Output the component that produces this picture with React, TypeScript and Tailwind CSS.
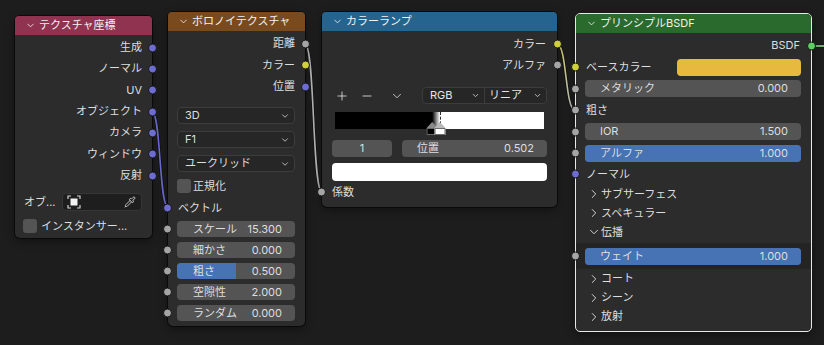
import { ChevronDown, ChevronRight, Plus, Minus, Pipette } from 'lucide-react';

type Sock = 'vec' | 'col' | 'flt' | 'sh';

const sockClass: Record<Sock, string> = {
  vec: 'bg-[#6c6cd2]',
  col: 'bg-[#cfcf3c]',
  flt: 'bg-[#a5a5a5]',
  sh: 'bg-[#5ccf60]',
};

const Socket = ({ type, side }: { type: Sock; side: 'in' | 'out' }) => (
  <span
    className={`absolute top-1/2 -translate-y-1/2 w-[9px] h-[9px] rounded-full border border-[#161616] ${sockClass[type]} ${
      side === 'in' ? 'left-[-5px]' : 'right-[-5px]'
    }`}
  />
);

const Header = ({ title, color, h }: { title: string; color: string; h: string }) => (
  <div className={`flex items-center gap-[3px] pl-[10px] text-[#f2f2f2] rounded-t-[4px] ${h} ${color}`}>
    <ChevronDown size={11} strokeWidth={1.75} />
    <span>{title}</span>
  </div>
);

const OutRow = ({ label, type, h, pr }: { label: string; type: Sock; h: string; pr: string }) => (
  <div className={`relative flex items-center justify-end ${h} ${pr}`}>
    <span>{label}</span>
    <Socket type={type} side="out" />
  </div>
);

const Field = ({
  label,
  value,
  fill,
  className,
}: {
  label: string;
  value: string;
  fill?: string;
  className: string;
}) => (
  <div className={`relative rounded-[4px] bg-[#545454] overflow-hidden flex items-center justify-between ${className}`}>
    {fill && <div className="absolute inset-y-0 left-0 bg-[#4772b3]" style={{ width: fill }} />}
    <span className="relative">{label}</span>
    <span className="relative">{value}</span>
  </div>
);

const Dropdown = ({ label }: { label: string }) => (
  <div className="h-[17px] rounded-[4px] bg-[#262626] border border-[#3c3c3c] flex items-center justify-between pl-[7px] pr-[4px]">
    <span>{label}</span>
    <ChevronDown size={10} strokeWidth={2} className="text-[#cfcfcf]" />
  </div>
);

const ObjIcon = () => (
  <svg width="14" height="14" viewBox="0 0 14 14" fill="none">
    <path d="M1 4V1h3M10 1h3v3M13 10v3h-3M4 13H1v-3" stroke="#d0d0d0" strokeWidth="1.2" />
    <rect x="3.5" y="3.5" width="7" height="7" fill="#f2f2f2" />
  </svg>
);

const PanelRow = ({ label, open }: { label: string; open?: boolean }) => (
  <div className="h-[19px] flex items-center gap-0 pl-[11px]">
    {open ? <ChevronDown size={14} strokeWidth={1.6} /> : <ChevronRight size={14} strokeWidth={1.6} />}
    <span>{label}</span>
  </div>
);

const TexCoordNode = () => (
  <div className="absolute left-[15px] top-[16px] w-[137px] rounded-[5px] bg-[#2c2c2c] shadow-[0_0_0_1px_rgba(0,0,0,0.55),0_3px_8px_rgba(0,0,0,0.4)]">
    <Header title="テクスチャ座標" color="bg-[#8f3350]" h="h-[19px]" />
    <div className="pt-[2px] pb-[5px]">
      {[
        ['生成', 'vec'],
        ['ノーマル', 'vec'],
        ['UV', 'vec'],
        ['オブジェクト', 'vec'],
        ['カメラ', 'vec'],
        ['ウィンドウ', 'vec'],
        ['反射', 'vec'],
      ].map(([l, t]) => (
        <OutRow key={l} label={l} type={t as Sock} h="h-[21.33px]" pr="pr-[10px]" />
      ))}
      <div className="mt-[7px] h-[18px] flex items-center pl-[9px] pr-[10px] gap-[6px]">
        <span className="w-[32px] shrink-0 whitespace-nowrap">オブ...</span>
        <div className="flex-1 h-[18px] rounded-[4px] bg-[#1e1e1e] border border-[#363636] flex items-center justify-between pl-[4px] pr-[5px]">
          <ObjIcon />
          <Pipette size={12} strokeWidth={1.75} className="text-[#d6d6d6]" />
        </div>
      </div>
      <div className="mt-[8px] h-[14px] flex items-center gap-[4px] pl-[8px]">
        <span className="w-[14px] h-[14px] rounded-[3px] bg-[#545454]" />
        <span className="whitespace-nowrap">インスタンサー...</span>
      </div>
    </div>
  </div>
);

const VoronoiNode = () => (
  <div className="absolute left-[168px] top-[12px] w-[137px] rounded-[5px] bg-[#2c2c2c] shadow-[0_0_0_1px_rgba(0,0,0,0.55),0_3px_8px_rgba(0,0,0,0.4)]">
    <Header title="ボロノイテクスチャ" color="bg-[#7a4a1f]" h="h-[19px]" />
    <div className="pt-[2px] pb-[5px]">
      <OutRow label="距離" type="flt" h="h-[21.5px]" pr="pr-[10px]" />
      <OutRow label="カラー" type="col" h="h-[21.5px]" pr="pr-[10px]" />
      <OutRow label="位置" type="vec" h="h-[21.5px]" pr="pr-[10px]" />
      <div className="mt-[9.5px] flex flex-col gap-[7px] pl-[9px] pr-[10px]">
        <Dropdown label="3D" />
        <Dropdown label="F1" />
        <Dropdown label="ユークリッド" />
      </div>
      <div className="mt-[7px] h-[14px] flex items-center gap-[2px] pl-[9px]">
        <span className="w-[14px] h-[14px] rounded-[3px] bg-[#545454]" />
        <span>正規化</span>
      </div>
      <div className="relative mt-[5px] h-[20px] flex items-center pl-[10px]">
        <span>ベクトル</span>
        <Socket type="vec" side="in" />
      </div>
      <div className="mt-[3px] flex flex-col gap-[5px]">
        {[
          ['スケール', '15.300', undefined],
          ['細かさ', '0.000', undefined],
          ['粗さ', '0.500', '50%'],
          ['空隙性', '2.000', undefined],
          ['ランダム', '0.000', undefined],
        ].map(([l, v, f]) => (
          <div key={l} className="relative h-[16px] pl-[9px] pr-[10px]">
            <Socket type="flt" side="in" />
            <Field label={l as string} value={v as string} fill={f} className="h-[16px] pl-[16px] pr-[13px]" />
          </div>
        ))}
      </div>
    </div>
  </div>
);

const Handle = ({ left, fill, active }: { left: string; fill: string; active?: boolean }) => (
  <div className="absolute top-[10px] w-[11px] -translate-x-1/2 flex flex-col items-center" style={{ left }}>
    <div className={`w-[11px] h-[6px] [clip-path:polygon(50%_0,100%_100%,0_100%)] ${active ? 'bg-[#b9b9b9]' : 'bg-[#8a8a8a]'}`} />
    <div className={`w-[11px] h-[7px] border border-[#6a6a6a] ${fill}`} />
  </div>
);

const ColorRampNode = () => (
  <div className="absolute left-[322px] top-[12px] w-[235px] rounded-[5px] bg-[#2c2c2c] shadow-[0_0_0_1px_rgba(0,0,0,0.55),0_3px_8px_rgba(0,0,0,0.4)]">
    <Header title="カラーランプ" color="bg-[#266490]" h="h-[19px]" />
    <div className="pt-[2.5px] pb-[6px]">
      <OutRow label="カラー" type="col" h="h-[21px]" pr="pr-[11px]" />
      <OutRow label="アルファ" type="flt" h="h-[21px]" pr="pr-[11px]" />
      <div className="mt-[11.5px] h-[17px] flex items-center pl-[13px] pr-[10px] text-[#e6e6e6]">
        <Plus size={14} strokeWidth={1.4} />
        <Minus size={14} strokeWidth={1.4} className="ml-[11px]" />
        <ChevronDown size={14} strokeWidth={1.4} className="ml-[16px]" />
        <div className="ml-auto w-[125px] h-[17px] rounded-[4px] bg-[#262626] border border-[#3c3c3c] flex">
          <div className="w-[62px] flex items-center justify-between pl-[7px] pr-[4px] border-r border-[#3c3c3c]">
            <span>RGB</span>
            <ChevronDown size={9} strokeWidth={2} />
          </div>
          <div className="flex-1 flex items-center justify-between pl-[4px] pr-[4px]">
            <span>リニア</span>
            <ChevronDown size={9} strokeWidth={2} />
          </div>
        </div>
      </div>
      <div className="relative mt-[8px] mx-[13px] h-[17px] bg-[linear-gradient(to_right,#000_46.5%,#fff_50.2%)]">
        <div className="absolute top-0 bottom-0 left-[50.2%] border-l border-dashed border-[#2a2a2a]" />
        <Handle left="46.5%" fill="bg-black" />
        <Handle left="50.2%" fill="bg-white" active />
      </div>
      <div className="mt-[11px] flex gap-[10px] px-[10px]">
        <div className="w-[60px] h-[17px] rounded-[4px] bg-[#545454] flex items-center justify-center">1</div>
        <Field label="位置" value="0.502" className="flex-1 h-[17px] pl-[15px] pr-[13px]" />
      </div>
      <div className="mt-[6px] mx-[10px] h-[18px] rounded-[4px] bg-white" />
      <div className="relative mt-[2px] h-[18px] flex items-center pl-[10px]">
        <span>係数</span>
        <Socket type="flt" side="in" />
      </div>
    </div>
  </div>
);

const BsdfNode = () => (
  <div className="absolute left-[575px] top-[13px] w-[237px] rounded-[5px] bg-[#2c2c2c] border border-[#e8e8e8] shadow-[0_3px_8px_rgba(0,0,0,0.4)]">
    <Header title="プリンシプルBSDF" color="bg-[#2a6a2c]" h="h-[19px]" />
    <div className="pt-[2px] pb-[5px]">
      <OutRow label="BSDF" type="sh" h="h-[21.5px]" pr="pr-[11px]" />
      <div className="relative h-[21.5px] flex items-center justify-between pl-[10px] pr-[10px]">
        <span>ベースカラー</span>
        <div className="w-[124px] h-[17px] rounded-[4px] bg-[#e8b93f]" />
        <Socket type="col" side="in" />
      </div>
      <div className="relative h-[21.5px] flex items-center pl-[9px] pr-[10px]">
        <Socket type="flt" side="in" />
        <Field label="メタリック" value="0.000" className="flex-1 h-[17px] pl-[15px] pr-[13px]" />
      </div>
      <div className="relative h-[21.5px] flex items-center pl-[10px]">
        <span>粗さ</span>
        <Socket type="flt" side="in" />
      </div>
      <div className="relative h-[21.5px] flex items-center pl-[9px] pr-[10px]">
        <Socket type="flt" side="in" />
        <Field label="IOR" value="1.500" className="flex-1 h-[17px] pl-[15px] pr-[13px]" />
      </div>
      <div className="relative h-[21.5px] flex items-center pl-[9px] pr-[10px]">
        <Socket type="flt" side="in" />
        <Field label="アルファ" value="1.000" fill="100%" className="flex-1 h-[17px] pl-[15px] pr-[13px]" />
      </div>
      <div className="relative h-[20.5px] flex items-center pl-[10px]">
        <span>ノーマル</span>
        <Socket type="vec" side="in" />
      </div>
      <PanelRow label="サブサーフェス" />
      <PanelRow label="スペキュラー" />
      <PanelRow label="伝播" open />
      <div className="relative mt-[1.5px] h-[26px] bg-[#242424] flex items-center pl-[9px] pr-[10px]">
        <Socket type="flt" side="in" />
        <Field label="ウェイト" value="1.000" fill="100%" className="flex-1 h-[17px] pl-[15px] pr-[13px]" />
      </div>
      <PanelRow label="コート" />
      <PanelRow label="シーン" />
      <PanelRow label="放射" />
    </div>
  </div>
);

export default function App() {
  return (
    <div className="relative w-[824px] h-[345px] overflow-hidden bg-[#1d1d1d] text-[11px] leading-none text-[#dedede] [font-family:Inter,'Noto_Sans_CJK_JP',sans-serif]">
      <svg className="absolute inset-0" width="824" height="345" fill="none">
        <defs>
          <linearGradient id="w3" x1="0" y1="0" x2="0" y2="1">
            <stop offset="0" stopColor="#d2cf6a" />
            <stop offset="1" stopColor="#b8b8b8" />
          </linearGradient>
        </defs>
        <path d="M152 112 C 161 112 159 207 168 207" stroke="#111" strokeWidth="3" />
        <path d="M152 112 C 161 112 159 207 168 207" stroke="#6c6cd2" strokeWidth="1.6" />
        <path d="M305 44 C 315 44 312 192 322 192" stroke="#111" strokeWidth="3" />
        <path d="M305 44 C 315 44 312 192 322 192" stroke="#b3b3b3" strokeWidth="1.6" />
        <path d="M557 44 C 567 44 565 110 575 110" stroke="#111" strokeWidth="3" />
        <path d="M557 44 C 567 44 565 110 575 110" stroke="url(#w3)" strokeWidth="1.6" />
        <path d="M812 46 L 824 46" stroke="#111" strokeWidth="3" />
        <path d="M812 46 L 824 46" stroke="#8fd98f" strokeWidth="1.6" />
      </svg>
      <TexCoordNode />
      <VoronoiNode />
      <ColorRampNode />
      <BsdfNode />
    </div>
  );
}
